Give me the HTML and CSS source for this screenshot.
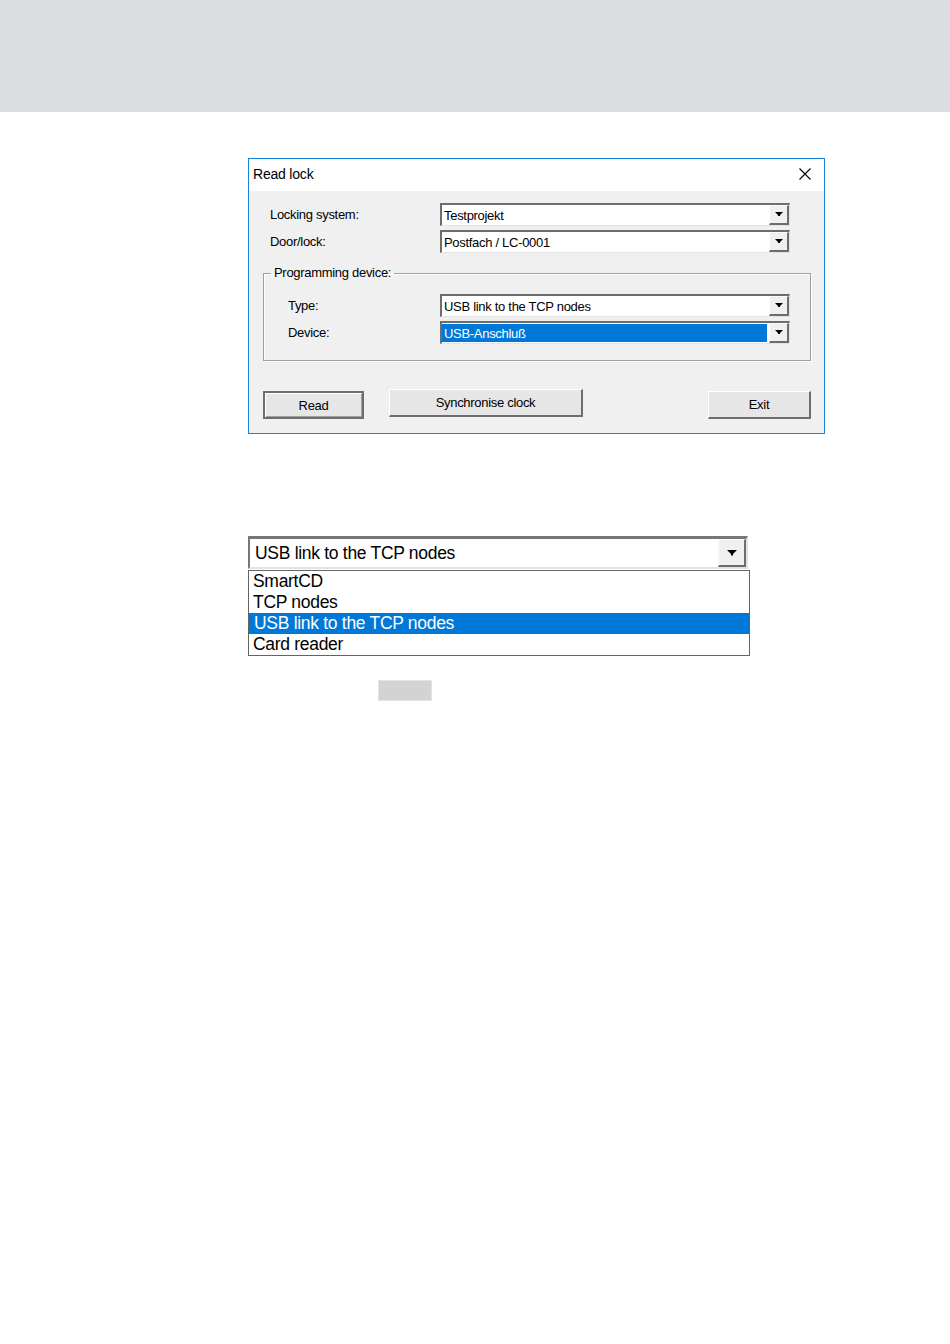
FILE: index.html
```html
<!DOCTYPE html>
<html>
<head>
<meta charset="utf-8">
<link rel="stylesheet" href="styles.css">
</head>
<body>
<div class="header"></div>
<div class="page">
  <div class="dialog">
    <div class="titlebar">
      <span class="title">Read lock</span>
      <svg class="close" width="12" height="12" viewBox="0 0 12 12"><path d="M0.5 0.5 L11.5 11.5 M11.5 0.5 L0.5 11.5" stroke="#000" stroke-width="1.1" fill="none"/></svg>
    </div>
    <div class="body">
      <div class="grid top">
        <span class="label">Locking system:</span>
        <div class="combo"><span class="val">Testprojekt</span><span class="btn"><svg width="8" height="5" viewBox="0 0 8 5"><path d="M0 0 H8 L5 3 V4 H3 V3 Z" fill="#000"/></svg></span></div>
        <span class="label">Door/lock:</span>
        <div class="combo"><span class="val">Postfach / LC-0001</span><span class="btn"><svg width="8" height="5" viewBox="0 0 8 5"><path d="M0 0 H8 L5 3 V4 H3 V3 Z" fill="#000"/></svg></span></div>
      </div>
      <fieldset class="group">
        <legend>Programming device:</legend>
        <div class="grid inner">
          <span class="label">Type:</span>
          <div class="combo"><span class="val">USB link to the TCP nodes</span><span class="btn"><svg width="8" height="5" viewBox="0 0 8 5"><path d="M0 0 H8 L5 3 V4 H3 V3 Z" fill="#000"/></svg></span></div>
          <span class="label">Device:</span>
          <div class="combo"><span class="val sel">USB-Anschluß</span><span class="btn"><svg width="8" height="5" viewBox="0 0 8 5"><path d="M0 0 H8 L5 3 V4 H3 V3 Z" fill="#000"/></svg></span></div>
        </div>
      </fieldset>
      <div class="buttons">
        <div class="button default read">Read</div>
        <div class="button sync">Synchronise clock</div>
        <div class="spacer"></div>
        <div class="button exit">Exit</div>
      </div>
    </div>
  </div>

  <div class="bigcombo">
    <span class="bigval">USB link to the TCP nodes</span>
    <span class="bigbtn"><svg width="10" height="6" viewBox="0 0 10 6"><path d="M0 0 H10 L6 4 V5.5 H4 V4 Z" fill="#000"/></svg></span>
  </div>
  <div class="list">
    <div class="item">SmartCD</div>
    <div class="item">TCP nodes</div>
    <div class="item selected">USB link to the TCP nodes</div>
    <div class="item">Card reader</div>
  </div>
  <div class="graybox"></div>
</div>
</body>
</html>
```

FILE: styles.css
```css
html, body {
  margin: 0;
  padding: 0;
  background: #fff;
  font-family: "Liberation Sans", Arial, sans-serif;
}
.header {
  height: 112px;
  background: #dcdde0;
}
.page {
  padding-left: 248px;
}
.dialog {
  margin-top: 46px;
  width: 577px;
  height: 276px;
  box-sizing: border-box;
  border: 1px solid #1883d7;
  background: #f0f0f0;
  color: #000;
}
.titlebar {
  height: 32px;
  box-sizing: border-box;
  background: #fff;
  display: flex;
  align-items: center;
  justify-content: space-between;
  padding: 0 13px 2px 4px;
}
.title {
  font-size: 14px;
  letter-spacing: -0.2px;
}
.close {
  display: block;
}
.body {
  padding: 12px 13px 0 14px;
  font-size: 13px;
  letter-spacing: -0.3px;
}
.grid {
  display: grid;
  grid-template-columns: 170px 350px;
  row-gap: 4px;
  align-items: center;
}
.grid.top {
  padding-left: 7px;
}
.label {
  line-height: 16px;
}
.combo {
  height: 23px;
  box-sizing: border-box;
  border-top: 2px solid #6d6d6d;
  border-left: 2px solid #6d6d6d;
  border-right: 1px solid #e3e3e3;
  border-bottom: 1px solid #e3e3e3;
  background: #fff;
  display: flex;
  align-items: stretch;
}
.val {
  flex: 1;
  display: flex;
  align-items: center;
  padding-left: 2px;
  margin: 1px 2px 1px 0;
}
.val.sel {
  background: #0078d7;
  color: #fff;
}
.btn {
  width: 20px;
  box-sizing: border-box;
  background: #f0f0f0;
  border-top: 1px solid #fbfbfb;
  border-left: 1px solid #fbfbfb;
  border-right: 2px solid #6d6d6d;
  border-bottom: 2px solid #6d6d6d;
  display: flex;
  align-items: center;
  justify-content: center;
}
.btn svg {
  display: block;
}
.group {
  margin: 12px 0 0 0;
  width: 548px;
  height: 96px;
  box-sizing: border-box;
  border: 1px solid #a0a0a0;
  box-shadow: inset 1px 1px 0 #fff, 1px 1px 0 #fff;
  padding: 13px 0 0 24px;
}
.group legend {
  padding: 0 3px;
  margin-left: -17px;
  line-height: 16px;
}
.grid.inner {
  grid-template-columns: 152px 350px;
}
.buttons {
  display: flex;
  align-items: flex-start;
  margin-top: 28px;
}
.button {
  box-sizing: border-box;
  display: flex;
  align-items: center;
  justify-content: center;
  background: #e6e6e6;
  border-top: 1px solid #fff;
  border-left: 1px solid #fff;
  border-right: 2px solid #6d6d6d;
  border-bottom: 2px solid #6d6d6d;
}
.button.default {
  border: 2px solid #6d6d6d;
  box-shadow: inset 1px 1px 0 #fff, inset -1px -1px 0 #a0a0a0;
}
.read {
  width: 101px;
  height: 28px;
  margin-top: 2px;
}
.sync {
  width: 194px;
  height: 28px;
  margin-left: 25px;
}
.spacer {
  flex: 1;
}
.exit {
  width: 103px;
  height: 28px;
  margin-top: 2px;
}
.bigcombo {
  margin-top: 102px;
  width: 500px;
  height: 33px;
  box-sizing: border-box;
  border-top: 3px solid #777;
  border-left: 2px solid #777;
  border-right: 2px solid #e2e2e2;
  border-bottom: 2px solid #e2e2e2;
  background: #fff;
  display: flex;
  align-items: stretch;
  font-size: 17.5px;
  letter-spacing: -0.3px;
}
.bigval {
  flex: 1;
  display: flex;
  align-items: center;
  padding-left: 5px;
}
.bigbtn {
  width: 28px;
  box-sizing: border-box;
  background: #f0f0f0;
  border-top: 1px solid #fafafa;
  border-left: 1px solid #fafafa;
  border-right: 2px solid #6d6d6d;
  border-bottom: 2px solid #6d6d6d;
  display: flex;
  align-items: center;
  justify-content: center;
}
.bigbtn svg {
  display: block;
}
.list {
  margin-top: 1px;
  width: 502px;
  box-sizing: border-box;
  border: 1px solid #646464;
  background: #fff;
  font-size: 17.5px;
  letter-spacing: -0.3px;
}
.item {
  height: 21px;
  line-height: 21px;
  padding-left: 4px;
}
.item.selected {
  background: #0078d7;
  color: #fff;
  padding-left: 5px;
}
.graybox {
  margin: 24px 0 0 130px;
  width: 54px;
  height: 21px;
  box-sizing: border-box;
  background: #d3d3d3;
  border: 1px solid #e4e4e4;
}
```
